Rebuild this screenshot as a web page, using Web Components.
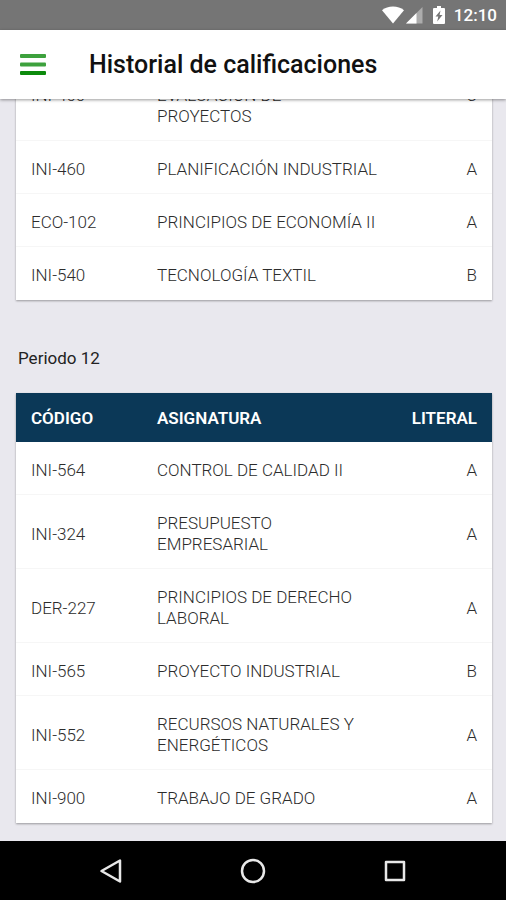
<!DOCTYPE html>
<html lang="es">
<head>
<meta charset="utf-8">
<meta name="viewport" content="width=device-width, initial-scale=1">
<title>Historial de calificaciones</title>
<style>
    html, body {
        height: 100%;
        margin: 0;
    }
    body {
        font-family: Roboto, "Liberation Sans", sans-serif;
        font-size: 17px;
        --brand: #0b3857;
        --page: #e9e8ee;
        --menu: #0c8a0c;
    }
</style>
</head>
<body>
<c-app>
    <c-status-bar slot="status">12:10</c-status-bar>
    <c-title-bar slot="title">Historial de calificaciones</c-title-bar>
    <c-period period="11" continued></c-period>
    <c-period period="12">Periodo 12</c-period>
    <c-nav-bar slot="nav"></c-nav-bar>
</c-app>

<script>
(function() {

    const grades = {
        11: [
            ['INI-400', 'EVALUACIÓN DE PROYECTOS', 'C'],
            ['INI-460', 'PLANIFICACIÓN INDUSTRIAL', 'A'],
            ['ECO-102', 'PRINCIPIOS DE ECONOMÍA II', 'A'],
            ['INI-540', 'TECNOLOGÍA TEXTIL', 'B']
        ],
        12: [
            ['INI-564', 'CONTROL DE CALIDAD II', 'A'],
            ['INI-324', 'PRESUPUESTO EMPRESARIAL', 'A'],
            ['DER-227', 'PRINCIPIOS DE DERECHO LABORAL', 'A'],
            ['INI-565', 'PROYECTO INDUSTRIAL', 'B'],
            ['INI-552', 'RECURSOS NATURALES Y ENERGÉTICOS', 'A'],
            ['INI-900', 'TRABAJO DE GRADO', 'A']
        ]
    };

    function makeTemplate(html) {
        const template = document.createElement('template');
        template.innerHTML = html;
        return template;
    }

    class BaseElement extends HTMLElement {
        constructor() {
            super();
            this.attachShadow({mode: 'open'});
            this.shadowRoot.appendChild(this.constructor.template.content.cloneNode(true));
        }
    }


    class App extends BaseElement {}
    App.template = makeTemplate(`
        <style>
            :host {
                display: flex;
                flex-direction: column;
                height: 100vh;
                background: var(--page);
            }
            /* the list rests at its end, older periods run up under the title */
            main {
                flex: 1;
                min-height: 0;
                display: flex;
                flex-direction: column;
                justify-content: flex-end;
                gap: 47px;
                padding: 0 14px 18px 16px;
                overflow: hidden;
            }
        </style>
        <slot name="status"></slot>
        <slot name="title"></slot>
        <main><slot></slot></main>
        <slot name="nav"></slot>
    `);


    class StatusBar extends BaseElement {}
    StatusBar.template = makeTemplate(`
        <style>
            :host {
                display: flex;
                align-items: center;
                justify-content: flex-end;
                height: 30px;
                padding-right: 9px;
                box-sizing: border-box;
                background: #757575;
                color: #fff;
                font-size: 17px;
                font-weight: 500;
            }
            svg {
                display: block;
                fill: #fff;
            }
            .signal {
                margin-left: 1px;
            }
            .battery {
                margin: 0 9px 0 10px;
            }
        </style>
        <svg width="22" height="18" viewBox="0 0 22 18" aria-hidden="true">
            <path d="M11 17.500L0 4.200C3 1.800 6.800.5 11 .5s8 1.300 11 3.700z"/>
        </svg>
        <svg class="signal" width="18" height="18" viewBox="0 0 18 18" aria-hidden="true">
            <path d="M1 17.500L17.500 1v16.500z" opacity=".4"/>
            <path d="M1 17.500L11.500 7v10.500z"/>
        </svg>
        <svg class="battery" width="12" height="18" viewBox="0 0 12 18" aria-hidden="true">
            <path fill-rule="evenodd" d="M4 0h4v2h3q1 0 1 1v14q0 1-1 1H1q-1 0-1-1V3q0-1 1-1h3zM7.500 4.500L2.500 10.500h2.800l-1.100 5L9.500 9H6.600z"/>
        </svg>
        <slot></slot>
    `);


    class TitleBar extends BaseElement {}
    TitleBar.template = makeTemplate(`
        <style>
            :host {
                display: block;
                position: relative;
                z-index: 1;
                background: #fff;
                box-shadow: 0 1px 3px rgba(0, 0, 0, .4);
            }
            header {
                display: flex;
                align-items: center;
                height: 69px;
                padding-left: 12px;
            }
            button {
                padding: 8px;
                border: 0;
                background: none;
            }
            svg {
                display: block;
                fill: var(--menu);
            }
            h1 {
                margin: 0 0 0 35px;
                font-size: 25px;
                line-height: 33px;
                font-weight: 500;
                color: #111;
            }
        </style>
        <header>
            <button type="button" aria-label="Menú">
                <svg width="26" height="22" viewBox="0 0 26 22">
                    <rect y="0" width="26" height="4" rx="1" opacity=".8"/>
                    <rect y="8.500" width="26" height="4" rx="1" opacity=".8"/>
                    <rect y="17" width="26" height="4" rx="1"/>
                </svg>
            </button>
            <h1><slot></slot></h1>
        </header>
    `);


    class Period extends BaseElement {

        connectedCallback() {
            //a continued period has its heading further up the list
            if(this.hasAttribute('continued')) {
                this.shadowRoot.querySelector('h2').remove();
                this.shadowRoot.querySelector('thead').remove();
            }

            let body = this.shadowRoot.querySelector('tbody');
            for(const grade of grades[this.getAttribute('period')]) {
                let row = body.insertRow();
                for(const text of grade) {
                    row.insertCell().textContent = text;
                }
            }
        }
    }
    Period.template = makeTemplate(`
        <style>
            :host {
                display: block;
                flex: none;
            }
            h2 {
                margin: 0 0 24px 2px;
                font-size: 17px;
                line-height: 22px;
                font-weight: 400;
                color: #222;
            }
            table {
                width: 100%;
                table-layout: fixed;
                border-collapse: separate;
                border-spacing: 0;
                background: #fff;
                box-shadow: 0 1px 2px rgba(0, 0, 0, .35);
            }
            .code {
                width: 126px;
            }
            .literal {
                width: 114px;
            }
            th, td {
                padding: 18px 0 13px 15px;
                line-height: 21px;
                text-align: left;
                vertical-align: middle;
            }
            th {
                padding-top: 15px;
                background: var(--brand);
                color: #fff;
                font-weight: 600;
            }
            td {
                border-bottom: 1px solid #f6f6f6;
                color: #2c2c2c;
                font-weight: 300;
            }
            tr:last-child td {
                border-color: transparent;
            }
            :host([continued]) tr:first-child td {
                vertical-align: top;
            }
            th:last-child, td:last-child {
                padding-right: 15px;
                text-align: right;
            }
        </style>
        <h2><slot></slot></h2>
        <table>
            <colgroup><col class="code"><col><col class="literal"></colgroup>
            <thead>
                <tr><th scope="col">CÓDIGO</th><th scope="col">ASIGNATURA</th><th scope="col">LITERAL</th></tr>
            </thead>
            <tbody></tbody>
        </table>
    `);


    class NavBar extends BaseElement {}
    NavBar.template = makeTemplate(`
        <style>
            :host {
                display: block;
                background: #000;
            }
            nav {
                display: flex;
                justify-content: center;
                gap: 102px;
                height: 59px;
            }
            button {
                display: flex;
                align-items: center;
                justify-content: center;
                width: 40px;
                padding: 0;
                border: 0;
                background: none;
            }
            svg {
                fill: none;
                stroke: #e8e8e8;
                stroke-width: 2.500;
                stroke-linejoin: round;
            }
        </style>
        <nav>
            <button type="button" aria-label="Atrás">
                <svg width="26" height="26" viewBox="0 0 26 26"><path d="M22 2.500v21L3.500 13z"/></svg>
            </button>
            <button type="button" aria-label="Inicio">
                <svg width="26" height="26" viewBox="0 0 26 26"><circle cx="13" cy="13" r="11"/></svg>
            </button>
            <button type="button" aria-label="Recientes">
                <svg width="26" height="26" viewBox="0 0 26 26"><rect x="4" y="4" width="18" height="18"/></svg>
            </button>
        </nav>
    `);

    customElements.define('c-app', App);
    customElements.define('c-status-bar', StatusBar);
    customElements.define('c-title-bar', TitleBar);
    customElements.define('c-period', Period);
    customElements.define('c-nav-bar', NavBar);
})();
</script>
</body>
</html>
